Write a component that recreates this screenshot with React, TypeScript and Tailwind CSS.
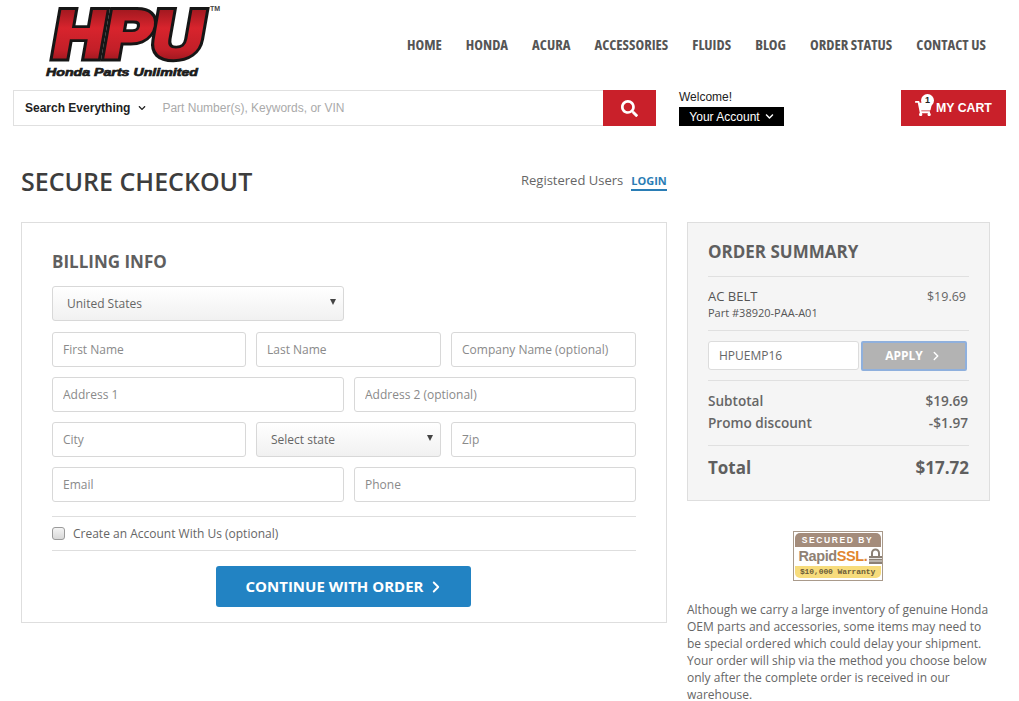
import React from "react";
import { FaSearch, FaShoppingCart, FaChevronDown } from "react-icons/fa";
import { ChevronRight } from "lucide-react";

const nav = ["HOME", "HONDA", "ACURA", "ACCESSORIES", "FLUIDS", "BLOG", "ORDER STATUS", "CONTACT US"];

function Logo() {
  const font = "'Liberation Sans', sans-serif";
  return (
    <svg width="180" height="80" viewBox="0 0 180 80" className="block overflow-visible">
      <defs>
        <linearGradient id="red" x1="0" y1="0" x2="0" y2="1">
          <stop offset="0" stopColor="#7e1117" />
          <stop offset="0.42" stopColor="#d8242d" />
          <stop offset="0.72" stopColor="#c21f28" />
          <stop offset="1" stopColor="#7c1017" />
        </linearGradient>
      </defs>
      <g transform="translate(5 53) skewX(-10) scale(1.08 1)" fontFamily={font} fontWeight="700" fontSize="66">
        <text x="0" y="0" fill="#161616" stroke="#161616" strokeWidth="9" strokeLinejoin="miter">HPU</text>
        <text x="0" y="0" fill="url(#red)" stroke="url(#red)" strokeWidth="3.2" strokeLinejoin="miter">HPU</text>
      </g>
      <text x="165" y="7" fontFamily={font} fontWeight="700" fontSize="7" fill="#444">TM</text>
      <text x="1" y="72" fontFamily={font} fontWeight="700" fontStyle="italic" fontSize="11.5" textLength="152" lengthAdjust="spacingAndGlyphs" fill="#1b1b1b" stroke="#1b1b1b" strokeWidth="0.7">Honda Parts Unlimited</text>
    </svg>
  );
}

function Field({ ph, className = "" }: { ph: string; className?: string }) {
  return (
    <input
      placeholder={ph}
      className={`h-[35px] min-w-0 rounded-[3px] border border-[#d8d8d8] bg-white px-2.5 text-[12px] text-[#666] placeholder:text-[#8a8a8a] ${className}`}
    />
  );
}

function Select({ label, className = "" }: { label: string; className?: string }) {
  return (
    <div className={`relative h-[35px] ${className}`}>
      <select className="h-full w-full appearance-none rounded-[3px] border border-[#d8d8d8] bg-gradient-to-b from-white to-[#f1f1f1] pl-3.5 text-[12px] text-[#666]">
        <option>{label}</option>
      </select>
      <span className="absolute right-[8px] top-[13px] h-0 w-0 border-x-[3px] border-t-[6px] border-x-transparent border-t-[#444]" />
    </div>
  );
}

function SslBadge() {
  return (
    <div className="flex h-[50px] w-[90px] flex-col border border-[#a99a8b] bg-white p-[1px]">
      <div className="flex h-[14px] items-center justify-center rounded-t-[5px] bg-[#a48c7b] text-[8.5px] font-bold tracking-[1.6px] text-white [font-family:'Liberation_Sans',sans-serif]">
        SECURED BY
      </div>
      <div className="flex h-[19px] items-center pl-[4px] text-[14.5px] font-bold leading-none tracking-[-0.4px] [font-family:'Liberation_Sans',sans-serif]">
        <span className="text-[#8f8173]">Rapid</span>
        <span className="text-[#e2852e]">SSL.</span>
        <svg width="15" height="17" viewBox="0 0 15 17" className="ml-[1px] shrink-0">
          <path d="M4 8V5a3.5 3.5 0 0 1 7 0V8" fill="none" stroke="#8b8075" strokeWidth="2" />
          <rect x="1" y="8" width="13" height="8" fill="#8b8075" />
          <path d="M1 10.5h13M1 13h13" stroke="#fff" strokeWidth="0.8" />
        </svg>
      </div>
      <div className="flex h-[12px] items-center justify-center whitespace-nowrap rounded-b-[5px] bg-[#f7dc7c] text-[8px] font-bold leading-none tracking-[-0.1px] text-[#6b5d3a] [font-family:'Liberation_Mono',monospace]">
        $10,000 Warranty
      </div>
    </div>
  );
}

export default function App() {
  return (
    <div className="h-[701px] w-[1019px] overflow-hidden bg-white text-[#666] [font-family:'Open_Sans',sans-serif]">
      {/* Header */}
      <header className="flex h-[90px] items-start pl-[45px] pr-[33px]">
        <div className="pt-[4px]">
          <Logo />
        </div>
        <nav className="ml-auto flex gap-[24px] pt-[35px] text-[14.7px] font-bold leading-[18px] text-[#555] [font-stretch:75%]">
          {nav.map((n) => (
            <span key={n}>{n}</span>
          ))}
        </nav>
      </header>
      <div className="flex h-[36px] pl-[13px] pr-[13px]">
        <div className="flex w-[590px] items-center border border-r-0 border-[#e0e0e0] [font-family:'Liberation_Sans',sans-serif]">
          <span className="ml-[11px] text-[12px] font-bold text-[#222]">Search Everything</span>
          <FaChevronDown className="ml-[8px] text-[8px] text-[#222]" />
          <span className="ml-[16px] text-[12px] text-[#aaa]">Part Number(s), Keywords, or VIN</span>
        </div>
        <button className="flex w-[53px] items-center justify-center bg-[#c9202a] text-white">
          <FaSearch className="text-[17px]" />
        </button>
        <div className="ml-[23px] flex w-[105px] flex-col [font-family:'Liberation_Sans',sans-serif]">
          <div className="h-[17px] text-[12px] leading-[14px] text-[#222]">Welcome!</div>
          <div className="flex h-[19px] items-center justify-center gap-[5px] bg-black text-[12px] text-white">
            Your Account <FaChevronDown className="text-[9px]" />
          </div>
        </div>
        <div className="relative ml-auto flex w-[105px] items-center bg-[#c9202a] pl-[14px] text-white [font-family:'Liberation_Sans',sans-serif]">
          <FaShoppingCart className="text-[17px]" />
          <span className="ml-[4px] text-[12.3px] font-bold">MY CART</span>
          <span className="absolute left-[20px] top-[4px] flex h-[13px] w-[13px] items-center justify-center rounded-full bg-white text-[9px] font-bold leading-none text-[#222]">1</span>
        </div>
      </div>

      {/* Title row */}
      <div className="flex h-[96px] pl-[21px] pt-[37px]">
        <h1 className="w-[500px] text-[25px] font-semibold leading-[36px] text-[#3d3d3d]">SECURE CHECKOUT</h1>
        <div className="flex items-start gap-[8px] pt-[8px]">
          <span className="text-[13px] leading-[18px] text-[#666]">Registered Users</span>
          <span className="mt-[1px] border-b-2 border-[#2a7db5] text-[11px] font-bold leading-[17px] text-[#2a7db5]">LOGIN</span>
        </div>
      </div>

      {/* Main */}
      <div className="flex items-start gap-[20px] pl-[21px]">
        <section className="w-[646px] border border-[#dedede] pl-[30px] pr-[30px] pt-[27px]">
          <h2 className="mb-[12px] text-[17px] font-bold leading-[24px] text-[#5f5f5f]">BILLING INFO</h2>
          <div className="grid grid-cols-[292px_282px] gap-[10px]">
            <Select label="United States" />
            <div />
          </div>
          <div className="mt-[11px] grid grid-cols-[194px_185px_185px] gap-[10px]">
            <Field ph="First Name" />
            <Field ph="Last Name" />
            <Field ph="Company Name (optional)" />
          </div>
          <div className="mt-[10px] grid grid-cols-[292px_282px] gap-[10px]">
            <Field ph="Address 1" />
            <Field ph="Address 2 (optional)" />
          </div>
          <div className="mt-[10px] grid grid-cols-[194px_185px_185px] gap-[10px]">
            <Field ph="City" />
            <Select label="Select state" />
            <Field ph="Zip" />
          </div>
          <div className="mt-[10px] grid grid-cols-[292px_282px] gap-[10px]">
            <Field ph="Email" />
            <Field ph="Phone" />
          </div>
          <div className="mt-[14px] flex h-[35px] items-center border-y border-[#dedede]">
            <span className="h-[13px] w-[13px] rounded-[3px] border border-[#9a9a9a] bg-gradient-to-b from-[#f4f4f4] to-[#d8d8d8]" />
            <span className="ml-[8px] text-[12px] text-[#666]">Create an Account With Us (optional)</span>
          </div>
          <div className="flex pb-[15px] pl-[164px] pt-[15px]">
            <button className="flex h-[41px] w-[255px] items-center justify-center gap-[4px] rounded-[3px] bg-[#2283c3] pl-[4px] text-[15px] font-bold text-white">
              CONTINUE WITH ORDER <ChevronRight size={18} strokeWidth={2.5} />
            </button>
          </div>
        </section>

        <aside className="w-[303px]">
          <div className="h-[279px] border border-[#dedede] bg-[#f5f5f5] px-[20px] pt-[17px]">
            <h2 className="h-[37px] border-b border-[#e0e0e0] text-[17px] font-bold leading-[24px] text-[#5f5f5f]">ORDER SUMMARY</h2>
            <div className="flex h-[54px] justify-between border-b border-[#e0e0e0] pr-[3px] pt-[11px]">
              <div>
                <div className="text-[13px] font-medium leading-[17px] text-[#555]">AC BELT</div>
                <div className="text-[11px] leading-[16px] text-[#555]">Part #38920-PAA-A01</div>
              </div>
              <div className="text-[12.5px] font-medium leading-[17px] text-[#666]">$19.69</div>
            </div>
            <div className="flex h-[50px] items-center justify-between border-b border-[#e0e0e0] pr-[2px]">
              <div className="flex h-[29px] w-[151px] items-center rounded-[3px] border border-[#dcdcdc] bg-white pl-[10px] text-[12px] text-[#666]">HPUEMP16</div>
              <button className="flex h-[30px] w-[106px] items-center justify-center gap-[6px] rounded-[2px] border-2 border-[#8fb0dd] bg-[#b3b3b3] text-[12px] font-bold text-white">
                APPLY <ChevronRight size={14} strokeWidth={2.5} />
              </button>
            </div>
            <div className="h-[65px] border-b border-[#e0e0e0] pr-[1px] pt-[9px] text-[13.6px] font-semibold leading-[22px] text-[#666]">
              <div className="flex justify-between"><span>Subtotal</span><span>$19.69</span></div>
              <div className="flex justify-between"><span>Promo discount</span><span>-$1.97</span></div>
            </div>
            <div className="flex justify-between pt-[10px] text-[17px] font-bold leading-[24px] text-[#5f5f5f]">
              <span>Total</span><span>$17.72</span>
            </div>
          </div>
          <div className="flex justify-center pb-[20px] pr-[2px] pt-[30px]">
            <SslBadge />
          </div>
          <p className="text-[12px] leading-[17px] text-[#666]">
            Although we carry a large inventory of genuine Honda OEM parts and accessories, some items may need to be special ordered which could delay your shipment. Your order will ship via the method you choose below only after the complete order is received in our warehouse.
          </p>
        </aside>
      </div>
    </div>
  );
}
